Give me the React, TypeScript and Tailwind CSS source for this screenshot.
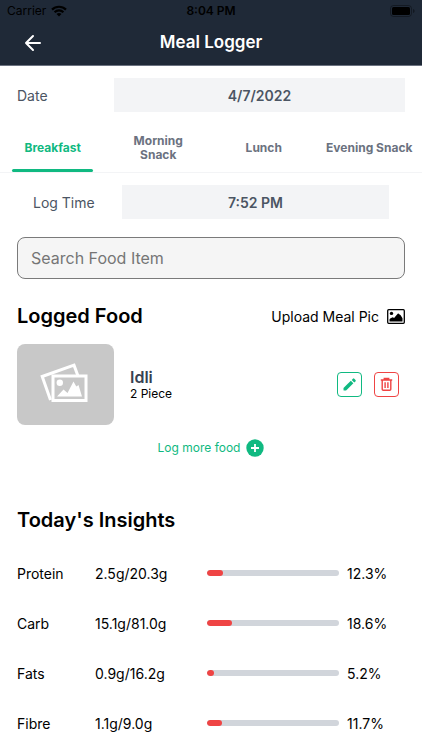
import React, { useState } from 'react';

interface Nutrient {
  name: string;
  amount: string;
  percent: number;
}

const TABS = ['Breakfast', 'Morning Snack', 'Lunch', 'Evening Snack'];

const NUTRIENTS: Nutrient[] = [
  { name: 'Protein', amount: '2.5g/20.3g', percent: 12.3 },
  { name: 'Carb', amount: '15.1g/81.0g', percent: 18.6 },
  { name: 'Fats', amount: '0.9g/16.2g', percent: 5.2 },
  { name: 'Fibre', amount: '1.1g/9.0g', percent: 11.7 },
];

const WifiIcon = () => (
  <svg width="16" height="12" viewBox="0 0 16 12" fill="none" stroke="#000" strokeWidth="2.2">
    <path d="M1 4.6a10 10 0 0 1 14 0" />
    <path d="M3.6 7.3a6.2 6.2 0 0 1 8.8 0" />
    <path d="M8 11.6 5.5 9.1a3.6 3.6 0 0 1 5 0z" fill="#000" stroke="none" />
  </svg>
);

const BatteryIcon = () => (
  <svg width="25" height="12" viewBox="0 0 25 12">
    <rect x="0.5" y="0.5" width="21" height="11" rx="3" fill="none" stroke="#000" strokeOpacity="0.35" />
    <rect x="2" y="2" width="18" height="8" rx="1.5" fill="#000" />
    <path d="M23 4v4c1-.4 1.6-1.100 1.600-2s-.6-1.600-1.600-2z" fill="#000" fillOpacity="0.4" />
  </svg>
);

const BackIcon = () => (
  <svg width="18" height="18" viewBox="0 0 18 18" fill="none" stroke="#fff" strokeWidth="2" strokeLinecap="round" strokeLinejoin="round">
    <path d="M9 2 2 9l7 7M2 9h14" />
  </svg>
);

const PictureIcon = () => (
  <svg width="18" height="15" viewBox="0 0 18 15">
    <rect x="0.700" y="0.700" width="16.600" height="13.600" rx="1" fill="none" stroke="#000" strokeWidth="1.300" />
    <circle cx="4.500" cy="4.400" r="1.700" />
    <path d="M2.500 12.600V10.800q0-.8.700-1.200l2-1.100q.5-.3 1 0l.9.500 3.600-4.300q.5-.5 1.100 0l.8.900q.3.400.9.400l2 3.200v3.400z" />
  </svg>
);

const PlaceholderIcon = () => (
  <svg width="48" height="40" viewBox="0 0 48 40" fill="none" stroke="#fff" strokeWidth="3">
    <path d="M10.500 37 2.200 13.500 34 2.200 38 13" />
    <rect x="13" y="13" width="33" height="24.500" />
    <circle cx="19.800" cy="19.700" r="3.200" fill="#fff" stroke="none" />
    <path d="M17 33.500l6.500-7 4 3.500 6-11.500 2.800 5 2.200-1.500 3.500 11.500z" fill="#fff" stroke="none" />
  </svg>
);

const PencilIcon = () => (
  <svg width="15" height="15" viewBox="0 0 15 15" fill="#10b981">
    <path d="M1.500 11 8.800 3.700l2.600 2.600-7.300 7.300H2.200q-.7 0-.7-.7z" />
    <path d="M9.700 2.900l1.200-1.200a1 1 0 0 1 1.400 0l1.200 1.200a1 1 0 0 1 0 1.400l-1.200 1.200z" />
  </svg>
);

const TrashIcon = () => (
  <svg width="15" height="15" viewBox="0 0 15 15" fill="none" stroke="#ef4444" strokeWidth="1.400">
    <path d="M1.800 3h11.400M5.300 2.800V1.500h4.400v1.300M3.200 3v9.200q0 1.100 1 1.100h6.600q1 0 1-1.100V3M6.100 5.200v5.800M8.900 5.200v5.800" />
  </svg>
);

const PlusCircleIcon = () => (
  <svg width="18" height="18" viewBox="0 0 18 18">
    <circle cx="9" cy="9" r="8.700" fill="#10b981" />
    <path d="M9 5v8M5 9h8" stroke="#fff" strokeWidth="1.800" />
  </svg>
);

const NutrientRow: React.FC<{ item: Nutrient }> = ({ item }) => (
  <li className="flex h-[50px] items-center text-[14px]">
    <span className="w-[78px] shrink-0">{item.name}</span>
    <span className="w-[112px] shrink-0">{item.amount}</span>
    <div className="h-[6px] flex-1 overflow-hidden rounded-full bg-[#d1d5db]">
      <div className="h-full min-w-[7px] rounded-full bg-[#ef4444]" style={{ width: `${item.percent}%` }} />
    </div>
    <span className="ml-2 w-[58px] shrink-0">{item.percent}%</span>
  </li>
);

export default function App() {
  const [activeTab, setActiveTab] = useState('Breakfast');
  const [search, setSearch] = useState('');

  return (
    <div className="min-h-screen bg-white font-['Inter',sans-serif] text-black">
      <header className="h-[66px] border-b border-[#6b7280] bg-[#1f2937]">
        {/* Status bar */}
        <div className="grid h-[22px] grid-cols-3 items-center px-[7px] text-[12px]">
          <div className="flex items-center gap-[5px]">
            <span>Carrier</span>
            <WifiIcon />
          </div>
          <span className="text-center font-semibold">8:04 PM</span>
          <div className="flex justify-end">
            <BatteryIcon />
          </div>
        </div>
        <div className="grid h-[42px] grid-cols-[1fr_auto_1fr] items-center px-6">
          <button aria-label="Back" className="justify-self-start">
            <BackIcon />
          </button>
          <h1 className="text-[17px] font-semibold text-white">Meal Logger</h1>
        </div>
      </header>

      <div className="flex items-center px-[17px] pt-3 text-[14px] text-[#4b5563]">
        <span id="date-label" className="w-[97px]">Date</span>
        <button aria-labelledby="date-label date-value" className="h-[34px] flex-1 bg-[#f3f4f6] font-semibold">
          <span id="date-value">4/7/2022</span>
        </button>
      </div>

      {/* Meal tabs */}
      <div role="tablist" className="mt-3 grid h-[49px] grid-cols-4 border-b border-[#f3f4f6] text-[12px] leading-[14px] font-bold">
        {TABS.map((tab) => {
          const isActive = tab === activeTab;
          return (
            <button
              key={tab}
              role="tab"
              aria-selected={isActive}
              onClick={() => setActiveTab(tab)}
              className={`flex flex-col items-center ${isActive ? 'text-[#10b981]' : 'text-[#6b7280]'}`}
            >
              <span className={`flex flex-1 items-center pt-[2px] ${tab === 'Morning Snack' ? 'w-16' : 'whitespace-nowrap'}`}>{tab}</span>
              <span className={`h-[3px] w-[81px] rounded-full ${isActive ? 'bg-[#10b981]' : ''}`} />
            </button>
          );
        })}
      </div>

      <div className="flex items-center px-[33px] pt-3 text-[14px] text-[#4b5563]">
        <span id="time-label" className="w-[89px]">Log Time</span>
        <button aria-labelledby="time-label time-value" className="h-[34px] flex-1 bg-[#f3f4f6] font-semibold">
          <span id="time-value">7:52 PM</span>
        </button>
      </div>

      <main className="px-[17px]">
        <input
          type="text"
          aria-label="Search Food Item"
          placeholder="Search Food Item"
          value={search}
          onChange={(e) => setSearch(e.target.value)}
          className="mt-[18px] h-[42px] w-full rounded-lg border border-[#7a7a7a] bg-[#f5f5f5] px-[13px] text-[16px] placeholder:text-[#757575]"
        />

        <div className="mt-[22px] flex h-[30px] items-center justify-between">
          <h2 className="text-[20px] font-semibold">Logged Food</h2>
          <button className="flex items-center gap-2 text-[14px]">
            Upload Meal Pic
            <PictureIcon />
          </button>
        </div>

        {/* Logged item */}
        <div className="mt-[13px] flex items-center">
          <div className="flex h-[81px] w-[97px] items-center justify-center rounded-lg bg-[#c8c8c8] pr-1 pb-1">
            <PlaceholderIcon />
          </div>
          <div className="ml-4 flex-1">
            <h3 className="text-[16px] leading-[18px] font-semibold text-[#374151]">Idli</h3>
            <p className="text-[12px] leading-[16px]">2 Piece</p>
          </div>
          <div className="flex gap-3 pr-[6px]">
            <button aria-label="Edit" className="flex size-[25px] items-center justify-center rounded border border-[#10b981]">
              <PencilIcon />
            </button>
            <button aria-label="Delete" className="flex size-[25px] items-center justify-center rounded border border-[#ef4444]">
              <TrashIcon />
            </button>
          </div>
        </div>

        <button className="mx-auto mt-[13px] flex h-5 items-center gap-[6px] text-[12px] text-[#10b981]">
          Log more food
          <PlusCircleIcon />
        </button>

        <h2 className="mt-[47px] text-[20px] leading-[30px] font-semibold">Today's Insights</h2>
        <ul className="mt-[13px]">
          {NUTRIENTS.map((item) => (
            <NutrientRow key={item.name} item={item} />
          ))}
        </ul>
      </main>
    </div>
  );
}
